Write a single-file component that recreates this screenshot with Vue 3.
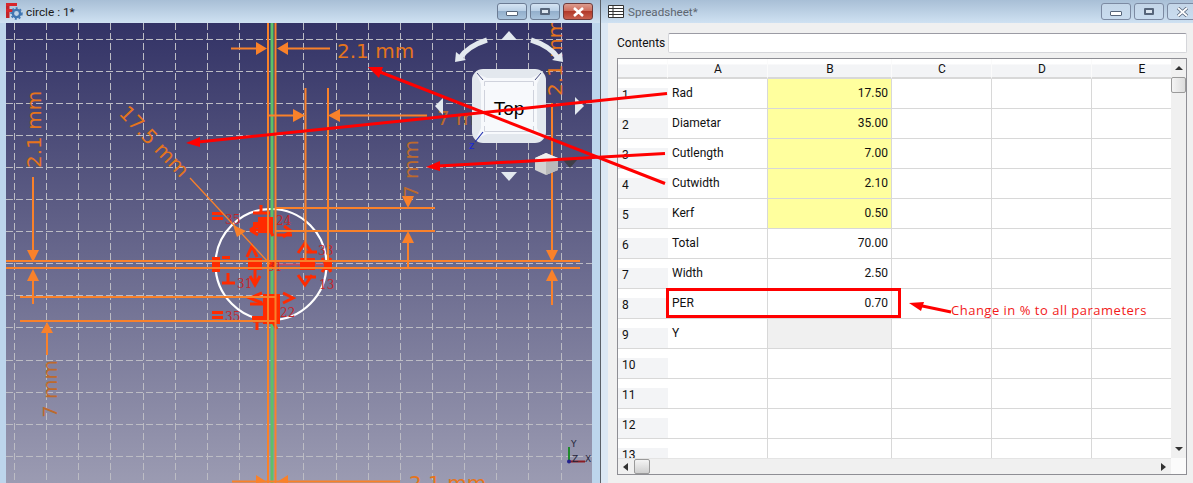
<script setup>
const vGrid = Array.from({ length: 18 }, (_, i) => Math.floor(14.5 + 32.15 * i) + 0.5)
const hGrid = Array.from({ length: 14 }, (_, i) => Math.floor(39 + 32.1 * i) + 0.5)

const orangeLines = [
  [268, 23, 268, 483], [275.5, 23, 275.5, 483],
  [231, 48.5, 258, 48.5], [285, 48.5, 330, 48.5],
  [268, 115.5, 295, 115.5], [338, 115.5, 427, 115.5],
  [305.5, 88, 305.5, 262], [328, 88, 328, 262],
  [275, 208, 435, 208], [275, 231, 435, 231],
  [408, 240, 408, 268], [6, 261, 580, 261], [6, 268, 580, 268],
  [33, 177, 33, 252], [33, 280, 33, 304],
  [552, 103, 552, 252], [552, 280, 552, 305],
  [20, 297, 276, 297], [20, 321, 276, 321],
  [47, 331, 47, 355], [232, 481.5, 400, 481.5],
]
const orangeHeads = [
  '256,42 267,48.5 256,55', '288,42 277,48.5 288,55',
  '293,109 305,115.5 293,122', '340,109 328,115.5 340,122',
  '402,196 414,196 408,208', '402,243 414,243 408,231',
  '27,250 39,250 33,262', '27,281 39,281 33,269',
  '546,250 558,250 552,262', '546,281 558,281 552,269',
  '41,333 53,333 47,322',
  '256,475 267,482 256,483', '288,475 277,482 288,483',
  '233,225 246,231 237,237',
]
const marks = [
  // top cluster
  'M253 213H270M261 205V213', 'M250 230L258 225M250 230L258 235M250 230H270',
  'M284 226L291 231L283 237', 'M266 222L273 236', 'M277 235H292',
  // left cluster
  'M222 283H235M228 273V283', 'M247 257L252 246L257 257', 'M250 276L255 285L260 276M255 270V284',
  // right cluster
  'M298 253L305 243L312 253M305 252H317', 'M298 275L305 285L312 275M305 277H316',
  'M322 258L331 272M331 258L322 272',
  // bottom cluster
  'M262 293L250 298L262 303', 'M283 293L293 298L283 303', 'M250 304H267',
  'M253 321H275M257 321V330M272 321L277 329',
]
const markFills = [
  [212, 212, 11, 3], [212, 217, 11, 3], [212, 311, 11, 3], [212, 316, 11, 3],
  [212, 257, 8, 15], [222, 256, 8, 3], [248, 258, 14, 12], [268, 261, 8, 8],
  [258, 217, 15, 16], [253, 222, 10, 6],
  [300, 258, 15, 12], [324, 260, 8, 10],
  [263, 294, 17, 30], [252, 316, 21, 6],
]
const markNums = [
  ['35', 225, 224], ['24', 276, 225], ['31', 237, 288], ['31', 267, 271],
  ['33', 318, 255], ['22', 280, 317], ['13', 319, 289], ['35', 225, 321],
]

const columns = ['A', 'B', 'C', 'D', 'E']
const rows = [
  { a: 'Rad', b: '17.50', tone: 'yellow' },
  { a: 'Diametar', b: '35.00', tone: 'yellow' },
  { a: 'Cutlength', b: '7.00', tone: 'yellow' },
  { a: 'Cutwidth', b: '2.10', tone: 'yellow' },
  { a: 'Kerf', b: '0.50', tone: 'yellow' },
  { a: 'Total', b: '70.00', tone: '' },
  { a: 'Width', b: '2.50', tone: '' },
  { a: 'PER', b: '0.70', tone: '' },
  { a: 'Y', b: '', tone: 'grey' },
  { a: '', b: '', tone: '' },
  { a: '', b: '', tone: '' },
  { a: '', b: '', tone: '' },
  { a: '', b: '', tone: '' },
]
</script>

<template>
  <div class="desk">
    <section class="win left">
      <header class="title">
        <svg class="fc" width="17" height="18" viewBox="0 0 17 18">
          <rect x="0" y="0" width="3.5" height="15" fill="#c4242a" />
          <rect x="0" y="0" width="11" height="3" fill="#d8262c" />
          <rect x="0" y="6" width="7" height="3" fill="#d8262c" />
          <circle cx="10.5" cy="10.5" r="3.6" fill="none" stroke="#3f76b2" stroke-width="2.4" />
          <circle cx="10.5" cy="10.5" r="5.4" fill="none" stroke="#3f76b2" stroke-width="1.6" stroke-dasharray="2 2" />
        </svg>
        <span class="name">circle : 1*</span>
        <div class="buttons">
          <span class="btn"><i class="min"></i></span>
          <span class="btn"><i class="max"></i></span>
          <span class="btn close">
            <svg width="13" height="10" viewBox="0 0 13 10"><path d="M2 1L11 9M11 1L2 9" stroke="#fff" stroke-width="2.6" /></svg>
          </span>
        </div>
      </header>
      <div class="port">
        <svg class="scene" width="586" height="460" viewBox="6 23 586 460">
          <defs>
            <linearGradient id="sky" x1="0" y1="0" x2="0" y2="1">
              <stop offset="0" stop-color="#333366" />
              <stop offset="1" stop-color="#9b9bb2" />
            </linearGradient>
          </defs>
          <rect x="6" y="23" width="586" height="460" fill="url(#sky)" />
          <g stroke="#bcbcc4" stroke-width="1" stroke-dasharray="7 3">
            <line v-for="x in vGrid" :key="'v' + x" :x1="x" y1="23" :x2="x" y2="483" />
            <line v-for="y in hGrid" :key="'h' + y" x1="6" :y1="y" x2="592" :y2="y" />
          </g>

          <circle cx="271" cy="264.5" r="55.5" fill="none" stroke="#fff" stroke-width="2.2" />
          <line x1="272" y1="23" x2="272" y2="483" stroke="#5cc169" stroke-width="3" />
          <line x1="271" y1="264.5" x2="327" y2="264.5" stroke="#c04a60" stroke-width="2" />

          <g stroke="#ff2b00" stroke-width="3" fill="none">
            <path v-for="(m, i) in marks" :key="'m' + i" :d="m" />
          </g>
          <rect v-for="(r, i) in markFills" :key="'f' + i" :x="r[0]" :y="r[1]" :width="r[2]" :height="r[3]" fill="#ff2b00" />
          <g class="num">
            <text v-for="(n, i) in markNums" :key="'n' + i" :x="n[1]" :y="n[2]">{{ n[0] }}</text>
          </g>

          <g stroke="#f9812a" stroke-width="2" fill="none">
            <line v-for="(l, i) in orangeLines" :key="'o' + i" :x1="l[0]" :y1="l[1]" :x2="l[2]" :y2="l[3]" />
          </g>
          <line x1="190" y1="178" x2="270" y2="264" stroke="#f9812a" stroke-width="1.3" />
          <polygon v-for="(p, i) in orangeHeads" :key="'p' + i" :points="p" fill="#f9812a" />

          <g class="dim">
            <text x="337" y="58">2.1 mm</text>
            <text x="409" y="490">2.1 mm</text>
            <text x="437" y="125" class="dull">7 mm</text>
            <text transform="translate(41,168) rotate(-90)">2.1 mm</text>
            <text transform="translate(562,96) rotate(-90)">2.1 mm</text>
            <text transform="translate(418,198) rotate(-90)" class="dull">7 mm</text>
            <text transform="translate(57,418) rotate(-90)" class="dull">7 mm</text>
            <text transform="translate(118,114) rotate(46)">17.5 mm</text>
          </g>

          <g class="cube">
            <polygon points="501,40 517,40 509,31" fill="#e3e9ef" />
            <polygon points="501,172 517,172 509,181" fill="#e3e9ef" />
            <polygon points="443,98 443,115 435,106" fill="#e3e9ef" />
            <polygon points="575,97 575,115 584,106" fill="#e3e9ef" />
            <path d="M487 40 Q468 46 460 58" fill="none" stroke="#e3e9ef" stroke-width="5" />
            <polygon points="455,62 456,52 466,60" fill="#e3e9ef" />
            <path d="M531 40 Q550 46 558 58" fill="none" stroke="#e3e9ef" stroke-width="5" />
            <polygon points="563,62 562,52 552,60" fill="#e3e9ef" />
            <rect x="472" y="69" width="74" height="74" rx="11" fill="#e3e8ee" />
            <polygon points="476,73 487,78 481,84" fill="#f4f6fa" />
            <polygon points="542,73 531,78 537,84" fill="#f4f6fa" />
            <polygon points="476,139 487,134 481,128" fill="#f4f6fa" />
            <polygon points="542,139 531,134 537,128" fill="#f4f6fa" />
            <rect x="481" y="78" width="56" height="56" rx="3" fill="#f7f9fc" />
            <path d="M484.5 86V81.5H533.5V86M484.5 126V131.5H533.5V126M484.5 90V122M533.5 90V122" fill="none" stroke="#cfd2dc" stroke-width="1" />
            <line x1="477" y1="73" x2="483" y2="80" stroke="#4a5080" stroke-width="1" />
            <line x1="541" y1="73" x2="535" y2="80" stroke="#4a5080" stroke-width="1" />
            <text x="509" y="115" class="top">Top</text>
            <line x1="483" y1="132" x2="475" y2="142" stroke="#2030b0" stroke-width="1.2" />
            <text x="469" y="149" class="zed">z</text>
            <polygon points="546,153 558,158 558,170 546,175 535,170 535,158" fill="#d2d2d2" />
            <polygon points="546,153 558,158 546,162 535,158" fill="#efefef" />
            <polygon points="546,162 558,158 558,170 546,175" fill="#b9b9b9" />
            <polygon points="563,160 577,160 570,168" fill="#3f3f48" />
          </g>

          <g class="triad">
            <line x1="569" y1="461" x2="569" y2="447" stroke="#1f8a2c" stroke-width="2" />
            <line x1="569" y1="461.5" x2="585" y2="461.5" stroke="#8a1c24" stroke-width="2" />
            <circle cx="569" cy="461.5" r="2" fill="#20208c" />
            <text x="571" y="447">Y</text>
            <text x="572" y="462">Z</text>
            <text x="585" y="462">X</text>
          </g>
        </svg>
      </div>
    </section>

    <section class="win right">
      <header class="title inactive">
        <svg class="grid-icon" width="16" height="13" viewBox="0 0 16 13">
          <path d="M.5 .5H15.5V12.5H.5ZM.5 3.5H15.5M.5 6.5H15.5M.5 9.5H15.5M5 .5V12.5" fill="#fff" stroke="#333" />
        </svg>
        <span class="name">Spreadsheet*</span>
        <div class="buttons">
          <span class="btn"><i class="min"></i></span>
          <span class="btn"><i class="max"></i></span>
          <span class="btn">
            <svg width="13" height="10" viewBox="0 0 13 10"><path d="M2 1L11 9M11 1L2 9" fill="none" stroke="#56657a" stroke-width="3.4" /><path d="M2 1L11 9M11 1L2 9" fill="none" stroke="#fff" stroke-width="1.8" /></svg>
          </span>
        </div>
      </header>
      <div class="body">
        <div class="contents">
          <label>Contents</label>
          <div class="input"></div>
        </div>
        <div class="frame">
          <div class="sheet">
            <div class="line head">
              <div class="cell h corner"></div>
              <div v-for="c in columns" :key="c" class="cell h" :class="'c' + c">{{ c }}</div>
            </div>
            <div v-for="(r, i) in rows" :key="i" class="line">
              <div class="cell n corner">{{ i + 1 }}</div>
              <div class="cell cA">{{ r.a }}</div>
              <div class="cell cB" :class="r.tone">{{ r.b }}</div>
              <div class="cell cC"></div>
              <div class="cell cD"></div>
              <div class="cell cE"></div>
            </div>
          </div>
          <div class="vbar">
            <span class="arrow up"></span>
            <span class="thumb"></span>
            <span class="arrow down"></span>
          </div>
          <div class="hbar">
            <span class="arrow lf"></span>
            <span class="thumb"></span>
            <span class="arrow rt"></span>
          </div>
          <div class="corner-box"></div>
        </div>
      </div>
    </section>

    <svg class="notes" width="1193" height="483" viewBox="0 0 1193 483">
      <g stroke="#ff0000" stroke-width="3" fill="none">
        <line x1="667" y1="93.5" x2="198" y2="142" />
        <line x1="665" y1="183.5" x2="380" y2="72" />
        <line x1="665" y1="153.5" x2="438" y2="166" />
        <line x1="951" y1="312" x2="920" y2="305.5" />
      </g>
      <g fill="#ff0000">
        <polygon points="186,143 200,137 200,147" />
        <polygon points="368,67 383,67 379,78" />
        <polygon points="426,167 440,161 440,171" />
        <polygon points="909,303 924,302 921,311" />
      </g>
      <rect x="667.5" y="289.5" width="232" height="27" fill="none" stroke="#ff0000" stroke-width="3" />
      <text x="951" y="315" class="note">Change in % to all parameters</text>
    </svg>
  </div>
</template>

<style>
html, body { margin: 0; overflow: hidden; }
</style>

<style scoped>
.desk {
  position: relative;
  width: 1193px;
  height: 483px;
  display: flex;
  overflow: hidden;
  font-family: Roboto, "Noto Sans", sans-serif;
  font-size: 12px;
  color: #111;
}
.win { display: flex; flex-direction: column; height: 483px; box-sizing: border-box; }
.left {
  width: 601px;
  background: #bdd5ec;
  border-right: 1px solid #5a6068;
  padding-left: 6px;
  box-sizing: border-box;
}
.right {
  flex: 1;
  min-width: 0;
  background: #dce8f4;
}
.title {
  height: 23px;
  flex: none;
  display: flex;
  align-items: center;
  background: linear-gradient(#a8bfd6, #cfe1f2);
  margin-left: -6px;
  padding-left: 6px;
  padding-right: 7px;
  box-sizing: border-box;
}
.title.inactive { margin-left: 0; padding-left: 7px; padding-right: 0; }
.fc { flex: none; margin-top: 1px; }
.name { margin-left: 3px; font-size: 11.8px; color: #1a1a1a; white-space: nowrap; }
.inactive .name { margin-left: 4px; font-size: 11.6px; color: #5d6670; }
.grid-icon { flex: none; }
.buttons { margin-left: auto; display: flex; gap: 3px; }
.inactive .buttons { margin-right: -4px; }
.btn {
  width: 28px;
  height: 15px;
  border: 1px solid #6c7c94;
  border-radius: 3px;
  display: flex;
  align-items: center;
  justify-content: center;
  background: linear-gradient(#d5e4f3 0, #bad0e6 45%, #93afcc 50%, #a9c3dc 100%);
  box-sizing: content-box;
}
.inactive .btn {
  background: linear-gradient(#c4d6e8, #c9dcef);
  border-color: #7c8aa2;
}
.btn.close {
  border-color: #6e3a3a;
  background: linear-gradient(#dc9c8e 0, #cf6e5e 45%, #b23a2a 50%, #c8604e 100%);
}
.min {
  display: block;
  width: 10px;
  height: 3px;
  margin-top: 4px;
  background: #fff;
  border: 1px solid #56657a;
  border-radius: 1px;
}
.max {
  display: block;
  width: 6px;
  height: 3px;
  background: #dce6f0;
  border: 2px solid #56657a;
  border-radius: 1px;
}
.port { width: 586px; height: 460px; flex: none; }
.scene { display: block; }
.dim text {
  font-family: "DejaVu Sans", sans-serif;
  font-size: 20px;
  font-weight: 400;
  fill: #e5741c;
}
.dim text.dull { fill: #bd6a2c; }
.num text {
  font-family: "DejaVu Serif", serif;
  font-size: 12px;
  fill: #c4262a;
}
.top {
  font-family: "Liberation Sans", sans-serif;
  font-size: 19px;
  text-anchor: middle;
  fill: #000;
}
.zed {
  font-family: "Liberation Sans", sans-serif;
  font-size: 11px;
  fill: #1a28d8;
}
.triad text {
  font-family: "DejaVu Sans", sans-serif;
  font-size: 9px;
  fill: #24243a;
}
.body {
  flex: 1;
  min-height: 0;
  margin-left: 7px;
  background: #f0f0f0;
  padding: 10px 6px 7px 9px;
  display: flex;
  flex-direction: column;
}
.contents { display: flex; align-items: center; height: 20px; flex: none; }
.contents label { width: 51px; flex: none; }
.input {
  flex: 1;
  height: 18px;
  background: #fff;
  border: 1px solid #d5d6da;
  border-top-color: #9b9ba4;
  border-radius: 2px;
}
.frame {
  margin-top: 5px;
  height: 417px;
  flex: none;
  border: 1px solid #8e8e94;
  background: #f0f0f0;
  display: grid;
  grid-template-columns: 553px 15px;
  grid-template-rows: 399px 1fr;
  box-sizing: border-box;
  overflow: hidden;
}
.sheet { overflow: hidden; background: #fff; }
.line { display: flex; height: 30px; }
.line.head { height: 20px; }
.cell {
  flex: none;
  height: 100%;
  box-sizing: border-box;
  border-right: 1px solid #d8d8d8;
  border-bottom: 1px solid #d8d8d8;
  padding: 0 3px 1px 4px;
  display: flex;
  align-items: center;
  white-space: nowrap;
  overflow: hidden;
}
.corner { width: 50px; }
.cA { width: 100px; }
.cB { width: 124px; justify-content: flex-end; }
.cC, .cD, .cE { width: 100px; }
.cell.h {
  justify-content: center;
  background: linear-gradient(#fff 0, #fff 30%, #f3f4f6 31%, #f3f4f6 100%);
  border-right: 1px solid #fbfbfb;
  border-bottom: 2px solid #d8d8d8;
  padding-bottom: 0;
  padding-top: 2px;
}
.cell.n {
  background: linear-gradient(#fff 0, #fff 30%, #f3f4f6 31%, #f3f4f6 100%);
  border-right: none;
  align-items: center;
  padding-bottom: 0;
  padding-top: 3px;
}
.yellow { background: #ffff9e; }
.grey { background: #f0f0f0; }
.vbar {
  display: flex;
  flex-direction: column;
  align-items: center;
  position: relative;
  background: #f0f0f0;
}
.hbar {
  display: flex;
  align-items: center;
  background: #f0f0f0;
  border-top: 1px solid #e4e4e4;
}
.thumb {
  display: block;
  border: 1px solid #9a9a9a;
  border-radius: 2px;
  background: linear-gradient(90deg, #f4f4f4, #dcdcdc);
  box-sizing: border-box;
}
.vbar .thumb { width: 15px; height: 16px; margin-top: 7px; }
.hbar .thumb { width: 16px; height: 15px; margin-left: 6px; background: linear-gradient(#f4f4f4, #cfcfcf); }
.arrow { display: block; width: 0; height: 0; border-style: solid; border-color: transparent; }
.up { border-width: 0 4px 4px; border-bottom-color: #333; margin-top: 7px; }
.down { border-width: 4px 4px 0; border-top-color: #333; margin-top: auto; margin-bottom: 7px; }
.lf { border-width: 4px 5px 4px 0; border-right-color: #333; margin-left: 5px; }
.rt { border-width: 4px 0 4px 5px; border-left-color: #333; margin-left: auto; margin-right: 5px; }
.corner-box { background: #fbfbfb; }
.notes { position: absolute; left: 0; top: 0; pointer-events: none; }
.note {
  font-family: "Open Sans", sans-serif;
  font-size: 13px;
  letter-spacing: .5px;
  fill: #f21a1a;
}
</style>
